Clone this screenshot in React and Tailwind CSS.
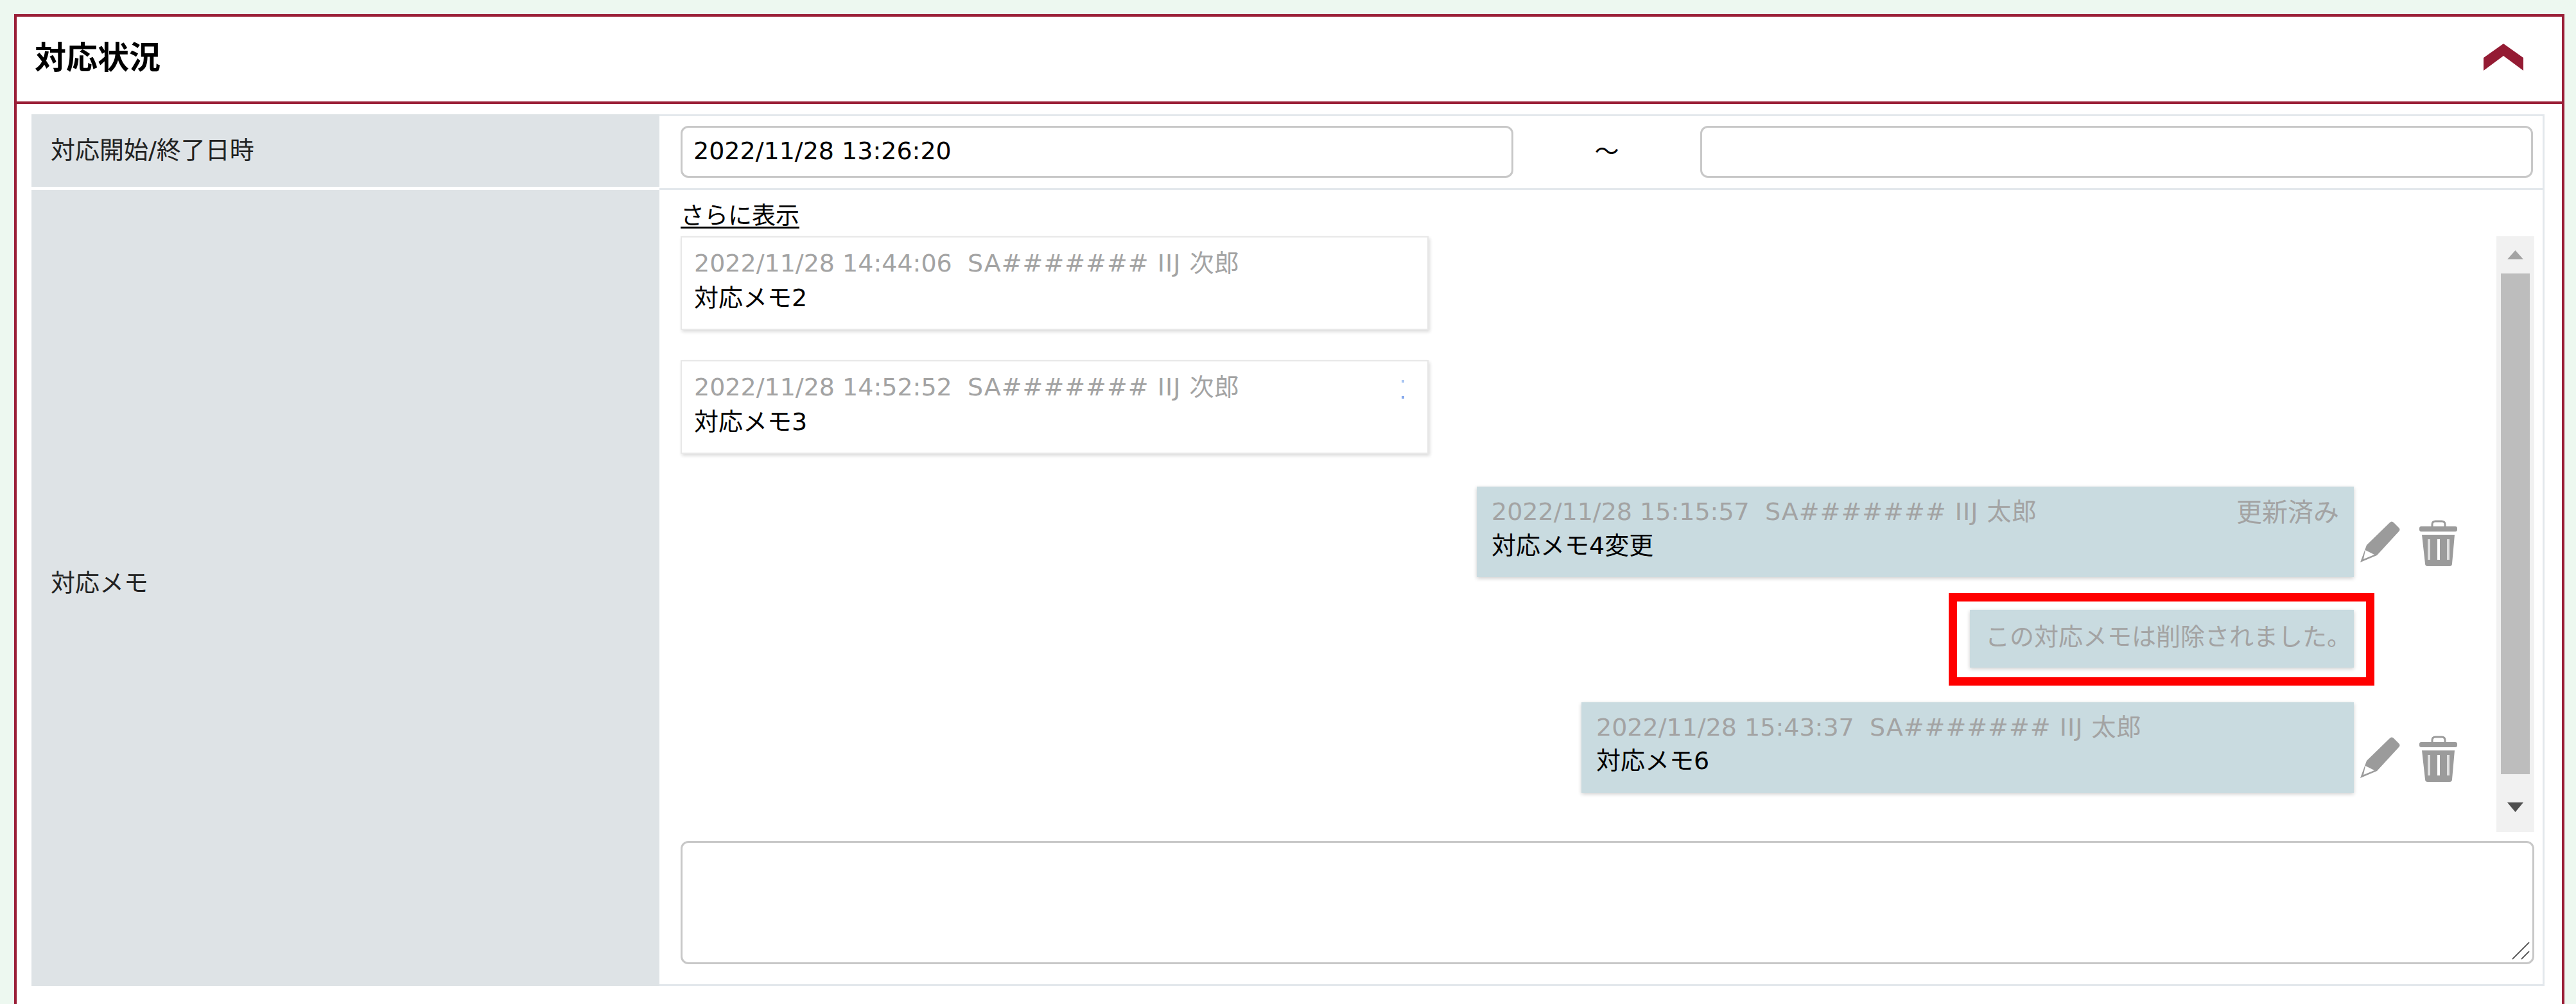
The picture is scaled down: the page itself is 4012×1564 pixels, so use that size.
import React from 'react'

const font = { fontFamily: '"DejaVu Sans", "Noto Sans CJK JP", sans-serif' }

function Chevron() {
  return (
    <svg className="w-[62px] h-[42px] mb-[6px]" viewBox="0 0 62 42">
      <polygon points="31,0 62,22 62,42 31,19 0,42 0,22" fill="#941b33" />
    </svg>
  )
}

function Pencil() {
  return (
    <svg className="w-[62px] h-[65px] mt-[2px]" viewBox="0 0 62 65">
      <path
        fillRule="evenodd"
        fill="#9b9b9b"
        d="M46 2 Q49 -1 52 2 L60 10 Q63 13 60 16 L26 53 L0 64 L10 37 Z M8 45 L5 59 L22 52 Z"
      />
    </svg>
  )
}

function Trash() {
  return (
    <svg className="w-[59px] h-[72px]" viewBox="0 0 59 72">
      <path d="M20 11 V7 Q20 2 25 2 H35 Q40 2 40 7 V11" fill="none" stroke="#9b9b9b" strokeWidth="3" />
      <rect x="0" y="10" width="59" height="8" rx="3" fill="#9b9b9b" />
      <path d="M4 23 H55 L51 68 Q51 72 47 72 H13 Q9 72 9 68 Z" fill="#9b9b9b" />
      <rect x="13" y="30" width="4" height="32" fill="#e0e0e0" />
      <rect x="28" y="30" width="4" height="32" fill="#ffffff" />
      <rect x="43" y="30" width="4" height="32" fill="#e0e0e0" />
    </svg>
  )
}

function Meta({ time, who }) {
  return (
    <div className="text-[#a3a3a3] leading-[50px] whitespace-pre">
      {time}{'  '}<span className="tracking-[1px]">{who}</span>
    </div>
  )
}

// memo from someone else, white card on the left
function OtherMemo({ time, who, body, dots, className }) {
  return (
    <div className={`relative w-[1165px] h-[146px] bg-white border-2 border-[#e8e8e8] shadow-[2px_3px_5px_rgba(0,0,0,0.14)] px-[19px] pt-[15px] ${className}`}>
      <Meta time={time} who={who} />
      <div className="leading-[50px] mt-[4px]">{body}</div>
      {dots && (
        <div className="absolute right-[36px] top-[29px] flex flex-col gap-[21px]">
          <div className="w-[4px] h-[4px] bg-[#a9c6f2]" />
          <div className="w-[4px] h-[4px] bg-[#86a9ec]" />
        </div>
      )}
    </div>
  )
}

// own memo, blue bubble on the right with edit icons
function OwnMemo({ time, who, body, updated, width, className }) {
  return (
    <div className={`flex justify-end ${className}`}>
      <div className={`${width} h-[141px] bg-[#c9dbe0] shadow-[0_2px_6px_rgba(0,0,0,0.2)] pl-[23px] pr-[23px] pt-[14px]`}>
        <div className="flex justify-between">
          <Meta time={time} who={who} />
          {updated && <span className="text-[#a3a3a3] text-[40px] leading-[50px] mt-[1px]">更新済み</span>}
        </div>
        <div className="leading-[50px] mt-[2px]">{body}</div>
      </div>
      <div className="w-[222px] flex items-start gap-[30px] pl-[10px] pt-[52px]">
        <Pencil />
        <Trash />
      </div>
    </div>
  )
}

export default function App() {
  return (
    <div className="h-screen overflow-hidden bg-[#edf8f0] pl-[22px] pr-[18px] pt-[22px] text-[38px] text-black" style={font}>
      <div className="h-[1542px] bg-white border-x-4 border-t-4 border-[#9a1f37]">
        <header className="h-[136px] border-b-4 border-[#9a1f37] flex items-center justify-between pl-[28px] pr-[60px]">
          <h1 className="text-[49px] font-bold mb-[2px]">対応状況</h1>
          <Chevron />
        </header>

        <div className="mt-[16px] ml-[23px] w-[3914px]">
          <div className="flex h-[118px]">
            <div className="w-[978px] shrink-0 bg-[#dee3e6] border-b-[5px] border-white pl-[30px] flex items-center text-[#222222]">
              対応開始/終了日時
            </div>
            <div className="flex-1 flex items-start border-t-[3px] border-b-[3px] border-r-[3px] border-[#e3e8ec] pl-[33px] pt-[15px]">
              <input
                readOnly
                value="2022/11/28 13:26:20"
                className="w-[1297px] h-[81px] border-[3px] border-[#c8c8c8] rounded-[12px] pl-[17px] pb-[3px] outline-none"
              />
              <div className="w-[291px] text-center leading-[81px]">～</div>
              <input readOnly value="" className="w-[1297px] h-[81px] border-[3px] border-[#c8c8c8] rounded-[12px] px-[18px] outline-none" />
            </div>
          </div>

          <div className="flex h-[1240px]">
            <div className="w-[978px] shrink-0 bg-[#dee3e6] pl-[30px] pb-[16px] flex items-center text-[#222222]">対応メモ</div>
            <div className="flex-1 border-b-[3px] border-r-[3px] border-[#e3e8ec] pl-[33px] pr-[13px] pt-[20px]">
              <a className="block h-[52px] text-[37px] leading-[42px] underline underline-offset-4 w-fit">さらに表示</a>

              <div className="flex h-[928px]">
                <div className="flex-1 min-w-0">
                  <OtherMemo time="2022/11/28 14:44:06" who="SA####### IIJ 次郎" body="対応メモ2" />
                  <OtherMemo time="2022/11/28 14:52:52" who="SA####### IIJ 次郎" body="対応メモ3" dots className="mt-[47px]" />
                  <OwnMemo
                    time="2022/11/28 15:15:57"
                    who="SA####### IIJ 太郎"
                    body="対応メモ4変更"
                    updated
                    width="w-[1366px]"
                    className="mt-[51px]"
                  />
                  <div className="flex justify-end mt-[51px] pr-[222px]">
                    <div className="relative w-[598px] h-[90px] bg-[#c9dbe0] shadow-[0_2px_6px_rgba(0,0,0,0.2)] pl-[24px] pb-[6px] flex items-center text-[#a3a3a3] whitespace-nowrap">
                      この対応メモは削除されました。
                      <div className="absolute -left-[33px] -right-[32px] -top-[26px] -bottom-[28px] border-[13px] border-[#ff0000]" />
                    </div>
                  </div>
                  <OwnMemo
                    time="2022/11/28 15:43:37"
                    who="SA####### IIJ 太郎"
                    body="対応メモ6"
                    width="w-[1203px]"
                    className="mt-[54px]"
                  />
                </div>

                {/* scrollbar */}
                <div className="w-[59px] shrink-0 bg-[#f1f1f1] flex flex-col items-center">
                  <div className="h-[58px] flex items-center justify-center">
                    <svg className="w-[25px] h-[14px]" viewBox="0 0 25 14"><polygon points="12.5,0 25,14 0,14" fill="#a3a3a3" /></svg>
                  </div>
                  <div className="w-[45px] h-[780px] bg-[#bdbdbd]" />
                  <div className="flex-1 flex items-center justify-center pt-[12px]">
                    <svg className="w-[25px] h-[15px]" viewBox="0 0 25 15"><polygon points="0,0 25,0 12.5,15" fill="#505050" /></svg>
                  </div>
                </div>
              </div>

              <div className="relative mt-[14px] h-[192px]">
                <textarea readOnly className="block w-full h-full resize-none border-[3px] border-[#c8c8c8] rounded-[12px] outline-none" />
                <svg className="absolute right-[6px] bottom-[6px] w-[30px] h-[30px]" viewBox="0 0 30 30">
                  <path d="M2 28 L28 2 M16 28 L28 16" stroke="#606060" strokeWidth="2" />
                </svg>
              </div>
            </div>
          </div>
        </div>
      </div>
    </div>
  )
}
